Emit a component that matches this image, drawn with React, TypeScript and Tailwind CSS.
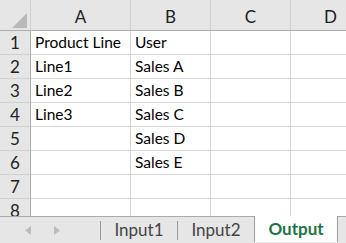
const cols = ['A', 'B', 'C', 'D']
const rows: [string, string][] = [
  ['Product Line', 'User'],
  ['Line1', 'Sales A'],
  ['Line2', 'Sales B'],
  ['Line3', 'Sales C'],
  ['', 'Sales D'],
  ['', 'Sales E'],
  ['', ''],
  ['', ''],
]

const font = { fontFamily: 'Lato, "Open Sans", sans-serif' }

export default function App() {
  return (
    <div className="w-[346px] h-[243px] flex flex-col bg-white overflow-hidden text-[#000]" style={font}>
      {/* grid */}
      <div className="h-[216px] overflow-hidden">
        <div className="grid grid-cols-[31px_100px_80px_80px_80px] auto-rows-[24px] grid-rows-[31px]">
          <div className="relative bg-[#e6e6e6] border-r border-b border-r-[#d0d0d0] border-b-[#ababab]">
            <svg className="absolute right-[3px] bottom-[2px]" width="15" height="15" viewBox="0 0 15 15">
              <polygon points="15,0 15,15 0,15" fill="#b9b9b9" />
            </svg>
          </div>
          {cols.map((c) => (
            <div
              key={c}
              className="bg-[#e6e6e6] border-r border-b border-r-[#d0d0d0] border-b-[#ababab] flex items-end justify-center pb-[1px] text-[17px] text-[#222]"
            >
              {c}
            </div>
          ))}
          {rows.map((r, i) => (
            <Row key={i} n={i + 1} a={r[0]} b={r[1]} />
          ))}
        </div>
      </div>

      {/* sheet tabs */}
      <div className="h-[27px] bg-[#e6e6e6] border-t border-[#ababab] flex items-stretch">
        <div className="w-[100px] flex items-center gap-[23px] pl-[25px]">
          <svg width="6" height="9" viewBox="0 0 6 9">
            <polygon points="6,0 6,9 0,4.5" fill="#bdbdbd" />
          </svg>
          <svg width="6" height="9" viewBox="0 0 6 9">
            <polygon points="0,0 0,9 6,4.5" fill="#bdbdbd" />
          </svg>
        </div>
        <div className="flex items-center h-[24px] mt-[1px]">
          <div className="w-px h-[19px] bg-[#9a9a9a]" />
          <div className="w-[76px] text-center text-[17px] text-[#444]">Input1</div>
          <div className="w-px h-[19px] bg-[#9a9a9a]" />
          <div className="w-[76px] text-center text-[17px] text-[#444]">Input2</div>
        </div>
        <div className="mt-[-1px] w-[84px] h-[26px] bg-white border-x border-[#9a9a9a] flex flex-col">
          <div className="flex-1 flex items-center justify-center text-[17px] font-bold text-[#217346]">Output</div>
          <div className="h-[2px] bg-[#217346] mb-[2px]" />
        </div>
      </div>
    </div>
  )
}

function Row({ n, a, b }: { n: number; a: string; b: string }) {
  const cell = 'border-r border-b border-[#d4d4d4] flex items-center px-[4px] text-[15.5px] whitespace-nowrap overflow-hidden'
  return (
    <>
      <div className="bg-[#e6e6e6] border-r border-b border-r-[#ababab] border-b-[#d0d0d0] flex items-center justify-center text-[17px] text-[#222]">
        {n}
      </div>
      <div className={cell}>{a}</div>
      <div className={cell}>{b}</div>
      <div className={cell} />
      <div className={cell} />
    </>
  )
}
